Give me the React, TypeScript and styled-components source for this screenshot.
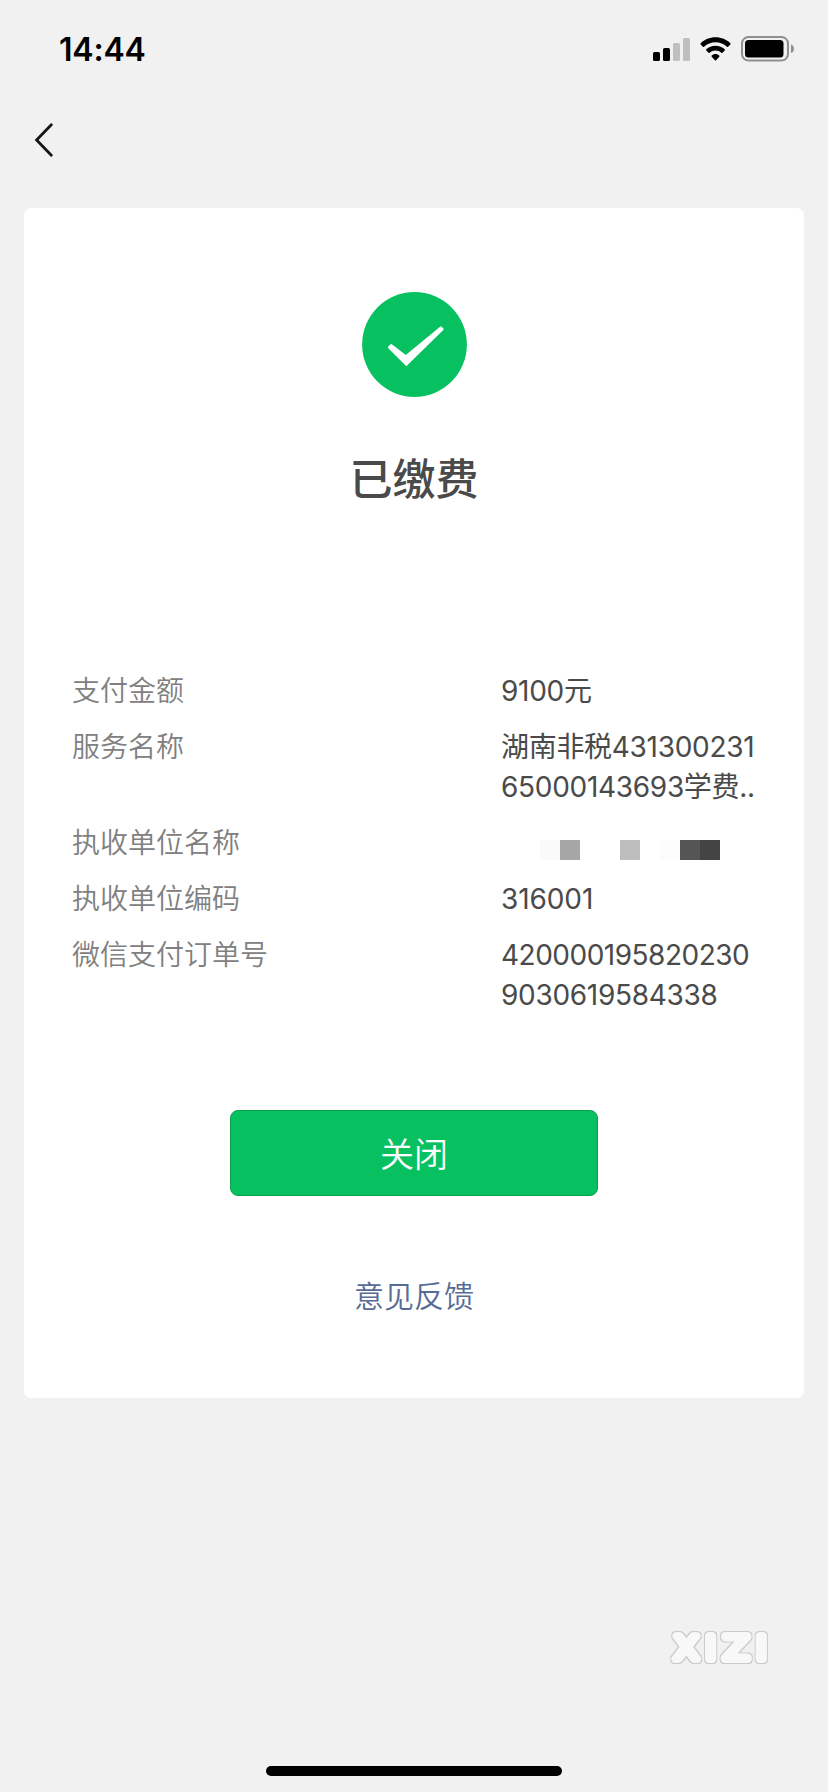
import React from "react";
import styled, { createGlobalStyle } from "styled-components";

const GlobalStyle = createGlobalStyle`
  * { box-sizing: border-box; }
  body {
    margin: 0;
    background: #f1f1f1;
    font-family: Inter, "Noto Sans CJK SC", sans-serif;
  }
`;

const Screen = styled.div`
  display: flex;
  flex-direction: column;
  width: 828px;
  height: 1792px;
  background: #f1f1f1;
  overflow: hidden;
`;

const StatusBar = styled.header`
  display: flex;
  justify-content: space-between;
  align-items: center;
  height: 98px;
  padding: 0 34px 0 59px;
`;

const Clock = styled.time`
  padding-top: 2px;
  font-size: 32px;
  line-height: 40px;
  font-weight: 600;
  letter-spacing: -0.2px;
  color: #000;
`;

const StatusIcons = styled.div`
  display: flex;
  align-items: center;
  gap: 10px;
`;

const NavBar = styled.nav`
  display: flex;
  align-items: center;
  height: 84px;
  padding-left: 34px;
`;

const BackButton = styled.button`
  display: flex;
  padding: 0;
  border: 0;
  background: none;
`;

const Card = styled.main`
  display: flex;
  flex-direction: column;
  align-items: center;
  height: 1190px;
  margin: 26px 24px 0;
  padding: 84px 48px 0;
  border-radius: 7px;
  background: #fff;
`;

const Title = styled.h1`
  margin: 51px 0 0;
  font-size: 43px;
  line-height: 62px;
  font-weight: 500;
  color: #4a4a4a;
`;

const Details = styled.dl`
  display: flex;
  flex-direction: column;
  gap: 16px;
  width: 100%;
  margin: 161px 0 0;
`;

const DetailRow = styled.div`
  display: flex;
  justify-content: space-between;
  font-size: 28px;
  line-height: 40px;
`;

const Label = styled.dt`
  color: #808080;
  font-weight: 350;
`;

const Value = styled.dd`
  display: flex;
  flex-direction: column;
  width: 255px;
  margin: 0;
  color: #4a4a4a;
  font-weight: 390;
  white-space: nowrap;
`;

const Line = styled.span<{ $spacing?: number }>`
  letter-spacing: ${({ $spacing = -0.3 }) => $spacing}px;
`;

const Mosaic = styled.span`
  display: flex;
  padding: 17px 0 3px 39px;
`;

const MosaicCell = styled.i<{ $tone: string }>`
  width: 20px;
  height: 20px;
  background: ${({ $tone }) => $tone};
`;

const CloseButton = styled.button`
  width: 368px;
  height: 86px;
  margin-top: 95px;
  padding: 0 0 2px;
  border: 1px solid #0a9f50;
  border-radius: 8px;
  background: #07c160;
  color: #fff;
  font-family: inherit;
  font-size: 34px;
  font-weight: 350;
`;

const FeedbackLink = styled.a`
  margin-top: 79px;
  font-size: 30px;
  line-height: 42px;
  font-weight: 350;
  color: #576b95;
`;

const Footer = styled.footer`
  display: flex;
  flex-direction: column;
  flex: 1;
  align-items: center;
  justify-content: space-between;
  padding: 226px 0 16px;
`;

const Watermark = styled.svg`
  align-self: flex-end;
  margin-right: 52px;

  text {
    font-family: "DejaVu Sans", sans-serif;
    font-size: 32px;
    font-weight: 200;
    text-anchor: middle;
    fill: #f8f8f8;
    stroke: #f8f8f8;
    stroke-width: 8.2px;
    stroke-linejoin: round;
  }
`;

const HomeIndicator = styled.div`
  width: 296px;
  height: 10px;
  border-radius: 5px;
  background: #000;
`;

const SignalIcon = () => (
  <svg width="37" height="24" viewBox="0 0 37 24">
    <rect x="0" y="15" width="7" height="9" rx="1.6" />
    <rect x="10" y="11" width="7" height="13" rx="1.6" />
    <rect x="20" y="6" width="7" height="18" rx="1.6" fill="#bfbfbf" />
    <rect x="30" y="1" width="7" height="23" rx="1.6" fill="#bfbfbf" />
  </svg>
);

const WifiIcon = () => (
  <svg width="31" height="24" viewBox="0 0 32 24" preserveAspectRatio="none">
    <path d="M16 0.3C22 0.3 27.500 2.600 31.300 6.200Q31.900 6.800 31.300 7.400L29 9.700Q28.400 10.200 27.800 9.700C24.600 6.800 20.500 5.200 16 5.200S7.400 6.800 4.200 9.700Q3.600 10.200 3 9.700L0.700 7.400Q0.100 6.800 0.700 6.200C4.500 2.600 10 0.300 16 0.300Z" />
    <path d="M16 8.700C19.700 8.700 23 10 25.500 12.300Q26.100 12.900 25.500 13.500L23.200 15.800Q22.600 16.300 22 15.800C20.400 14.400 18.300 13.500 16 13.500S11.600 14.400 10 15.800Q9.400 16.300 8.800 15.800L6.500 13.500Q5.900 12.900 6.500 12.300C9 10 12.300 8.700 16 8.700Z" />
    <path d="M16 17C17.600 17 18.900 17.600 19.900 18.500Q20.400 19.100 19.900 19.700L16.600 23.200Q16 23.800 15.400 23.200L12.100 19.700Q11.600 19.100 12.100 18.500C13.100 17.600 14.400 17 16 17Z" />
  </svg>
);

const BatteryIcon = () => (
  <svg width="53" height="26" viewBox="0 0 53 26">
    <rect x="1" y="1" width="46" height="23.500" rx="6.500" fill="none" stroke="#8f8f8f" strokeWidth="2" />
    <rect x="4" y="4" width="38.500" height="17.500" rx="3.500" />
    <path d="M50 8.300C52 9 52.900 10.600 52.900 12.700S52 16.400 50 17.100Z" fill="#8f8f8f" />
  </svg>
);

const BackIcon = () => (
  <svg width="20" height="34" viewBox="0 0 20 34">
    <path d="M17.300 1.800L2.600 17L17.300 32.200" fill="none" stroke="#161616" strokeWidth="2.800" strokeLinecap="round" strokeLinejoin="miter" />
  </svg>
);

const SuccessIcon = () => (
  <svg width="105" height="105" viewBox="0 0 105 105">
    <circle cx="52.500" cy="52.500" r="52.400" fill="#07c160" />
    <path d="M26.300 54.500L28.300 52.400Q29 51.700 29.800 52.300L43.800 63L78.100 34.700Q79 34 79.700 34.800L81.400 36.600Q82 37.300 81.300 38L44.300 74.300L26.300 56.300Q25.500 55.400 26.300 54.500Z" fill="#fff" />
  </svg>
);

const mosaicTones = [
  "#fafafa", "#a6a6a6", "#fff", "#fff", "#bdbdbd", "#fff", "#fcfcfc", "#555", "#444",
];

export default function App() {
  return (
    <>
      <GlobalStyle />
      <Screen>
        <StatusBar>
          <Clock>14:44</Clock>
          <StatusIcons>
            <SignalIcon />
            <WifiIcon />
            <BatteryIcon />
          </StatusIcons>
        </StatusBar>
        <NavBar>
          <BackButton aria-label="返回">
            <BackIcon />
          </BackButton>
        </NavBar>
        <Card>
          <SuccessIcon />
          <Title>已缴费</Title>
          <Details>
            <DetailRow>
              <Label>支付金额</Label>
              <Value><Line>9100元</Line></Value>
            </DetailRow>
            <DetailRow>
              <Label>服务名称</Label>
              <Value>
                <Line>湖南非税431300231</Line>
                <Line>65000143693学费..</Line>
              </Value>
            </DetailRow>
            <DetailRow>
              <Label>执收单位名称</Label>
              <Value>
                <Mosaic>
                  {mosaicTones.map((tone, i) => (
                    <MosaicCell key={i} $tone={tone} />
                  ))}
                </Mosaic>
              </Value>
            </DetailRow>
            <DetailRow>
              <Label>执收单位编码</Label>
              <Value><Line $spacing={-0.1}>316001</Line></Value>
            </DetailRow>
            <DetailRow>
              <Label>微信支付订单号</Label>
              <Value>
                <Line $spacing={-0.5}>420000195820230</Line>
                <Line>9030619584338</Line>
              </Value>
            </DetailRow>
          </Details>
          <CloseButton>关闭</CloseButton>
          <FeedbackLink>意见反馈</FeedbackLink>
        </Card>
        <Footer>
          <Watermark width="112" height="46" viewBox="0 0 112 46">
            <filter id="outline" filterUnits="userSpaceOnUse" x="0" y="0" width="112" height="46">
              <feMorphology in="SourceAlpha" operator="dilate" radius="1" result="grown" />
              <feFlood floodColor="#cacaca" />
              <feComposite in2="grown" operator="in" result="edge" />
              <feMerge>
                <feMergeNode in="edge" />
                <feMergeNode in="SourceGraphic" />
              </feMerge>
            </filter>
            <g filter="url(#outline)">
              <text transform="translate(0 35) scale(1.14 1)" x="19.500 41 63.400 85.500">XIZI</text>
            </g>
          </Watermark>
          <HomeIndicator />
        </Footer>
      </Screen>
    </>
  );
}
